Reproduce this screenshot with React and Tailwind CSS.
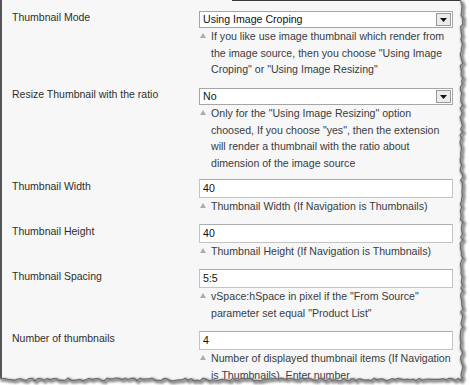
import React from 'react'

const font = { fontFamily: '"Liberation Sans", Arial, sans-serif' }

const rows = [
  {
    label: 'Thumbnail Mode',
    kind: 'select',
    value: 'Using Image Croping',
    mt: 'mt-[10px]',
    help: ['If you like use image thumbnail which render from', 'the image source, then you choose "Using Image', 'Croping" or "Using Image Resizing"'],
  },
  {
    label: 'Resize Thumbnail with the ratio',
    kind: 'select',
    value: 'No',
    mt: 'mt-[10.5px]',
    help: ['Only for the "Using Image Resizing" option', 'choosed, If you choose "yes", then the extension', 'will render a thumbnail with the ratio about', 'dimension of the image source'],
  },
  {
    label: 'Thumbnail Width',
    kind: 'input',
    value: '40',
    mt: 'mt-[8px]',
    help: ['Thumbnail Width (If Navigation is Thumbnails)'],
  },
  {
    label: 'Thumbnail Height',
    kind: 'input',
    value: '40',
    mt: 'mt-[9.5px]',
    help: ['Thumbnail Height (If Navigation is Thumbnails)'],
  },
  {
    label: 'Thumbnail Spacing',
    kind: 'input',
    value: '5:5',
    mt: 'mt-[9.5px]',
    help: ['vSpace:hSpace in pixel if the "From Source"', 'parameter set equal "Product List"'],
  },
  {
    label: 'Number of thumbnails',
    kind: 'input',
    value: '4',
    mt: 'mt-[10px]',
    help: ['Number of displayed thumbnail items (If Navigation', 'is Thumbnails). Enter number.'],
  },
]

// deterministic jitter for the torn paper edge
function jitter(i) {
  const s = Math.sin(i * 12.9898 + 78.233) * 43758.5453
  return s - Math.floor(s) - 0.5
}

function TornEdge() {
  const right = []
  for (let y = 0; y <= 380; y += 3) right.push([461.5 + jitter(y) * 3, y])
  const bottom = []
  for (let x = 461; x >= -2; x -= 3) bottom.push([x, 379.5 + jitter(x + 500) * 3])
  const edge = [...right, ...bottom]
  const pts = edge.map(p => p.join(',')).join(' ')
  const poly = `470,0 ${pts} -2,385 470,385`
  const shadow = edge.map(([x, y]) => `${x + 1.5},${y + 1.5}`).join(' ')
  return (
    <svg className="absolute inset-0 pointer-events-none" width="470" height="385">
      <defs>
        <filter id="blur" x="-10%" y="-10%" width="120%" height="120%">
          <feGaussianBlur stdDeviation="1.2" />
        </filter>
      </defs>
      <polygon points={poly} fill="#ffffff" />
      <polyline points={shadow} fill="none" stroke="#8a8a8a" strokeWidth="3.5" filter="url(#blur)" />
      <polyline points={pts} fill="none" stroke="#6e6e6e" strokeWidth="1.2" />
    </svg>
  )
}

function Triangle() {
  return (
    <svg width="6" height="5" viewBox="0 0 6 5" className="shrink-0 mt-[5px]">
      <path d="M3 0 L6 5 L0 5 Z" fill="#a7aeb6" />
    </svg>
  )
}

function Field({ row }) {
  if (row.kind === 'select') {
    return (
      <div className="h-[17px] w-[254px] bg-white border border-[#a6a6a6] flex items-center justify-between pl-[3px] pr-[1px]">
        <span className="text-[10.6px] text-[#111]">{row.value}</span>
        <div className="w-[15px] h-[13px] bg-[#ececec] border border-[#9a9a9a] flex items-center justify-center">
          <svg width="7" height="4" viewBox="0 0 7 4">
            <path d="M0 0 L7 0 L3.5 4 Z" fill="#111" />
          </svg>
        </div>
      </div>
    )
  }
  return (
    <div className="h-[19px] w-[254px] bg-white border border-[#c4c4c4] border-t-[#adadad] flex items-center pl-[3px]">
      <span className="text-[10.6px] text-[#111]">{row.value}</span>
    </div>
  )
}

function Row({ row }) {
  const h = row.kind === 'select' ? 'h-[17px]' : 'h-[19px]'
  return (
    <div className={`flex ${row.mt}`}>
      <div className={`w-[197px] pl-[10px] ${h} flex items-center -mt-[2px]`}>
        <span className="text-[10.5px] text-[#2e2e2e]">{row.label}</span>
      </div>
      <div className="flex flex-col">
        <Field row={row} />
        <div className="flex gap-[5px] pl-[1px]">
          <Triangle />
          <div className="text-[10.6px] leading-[16.5px] text-[#383c42]">
            {row.help.map((line, i) => (
              <div key={i}>{line}</div>
            ))}
          </div>
        </div>
      </div>
    </div>
  )
}

export default function App() {
  return (
    <div className="relative w-[470px] h-[385px] bg-white overflow-hidden" style={font}>
      <div className="w-[464px] h-[382px] bg-[#f7f7f7] border-l-2 border-[#555]">
        <div className="ml-[230px] h-[1px] bg-[#3a3a3a]" />
        {rows.map(row => (
          <Row key={row.label} row={row} />
        ))}
      </div>
      <TornEdge />
    </div>
  )
}
